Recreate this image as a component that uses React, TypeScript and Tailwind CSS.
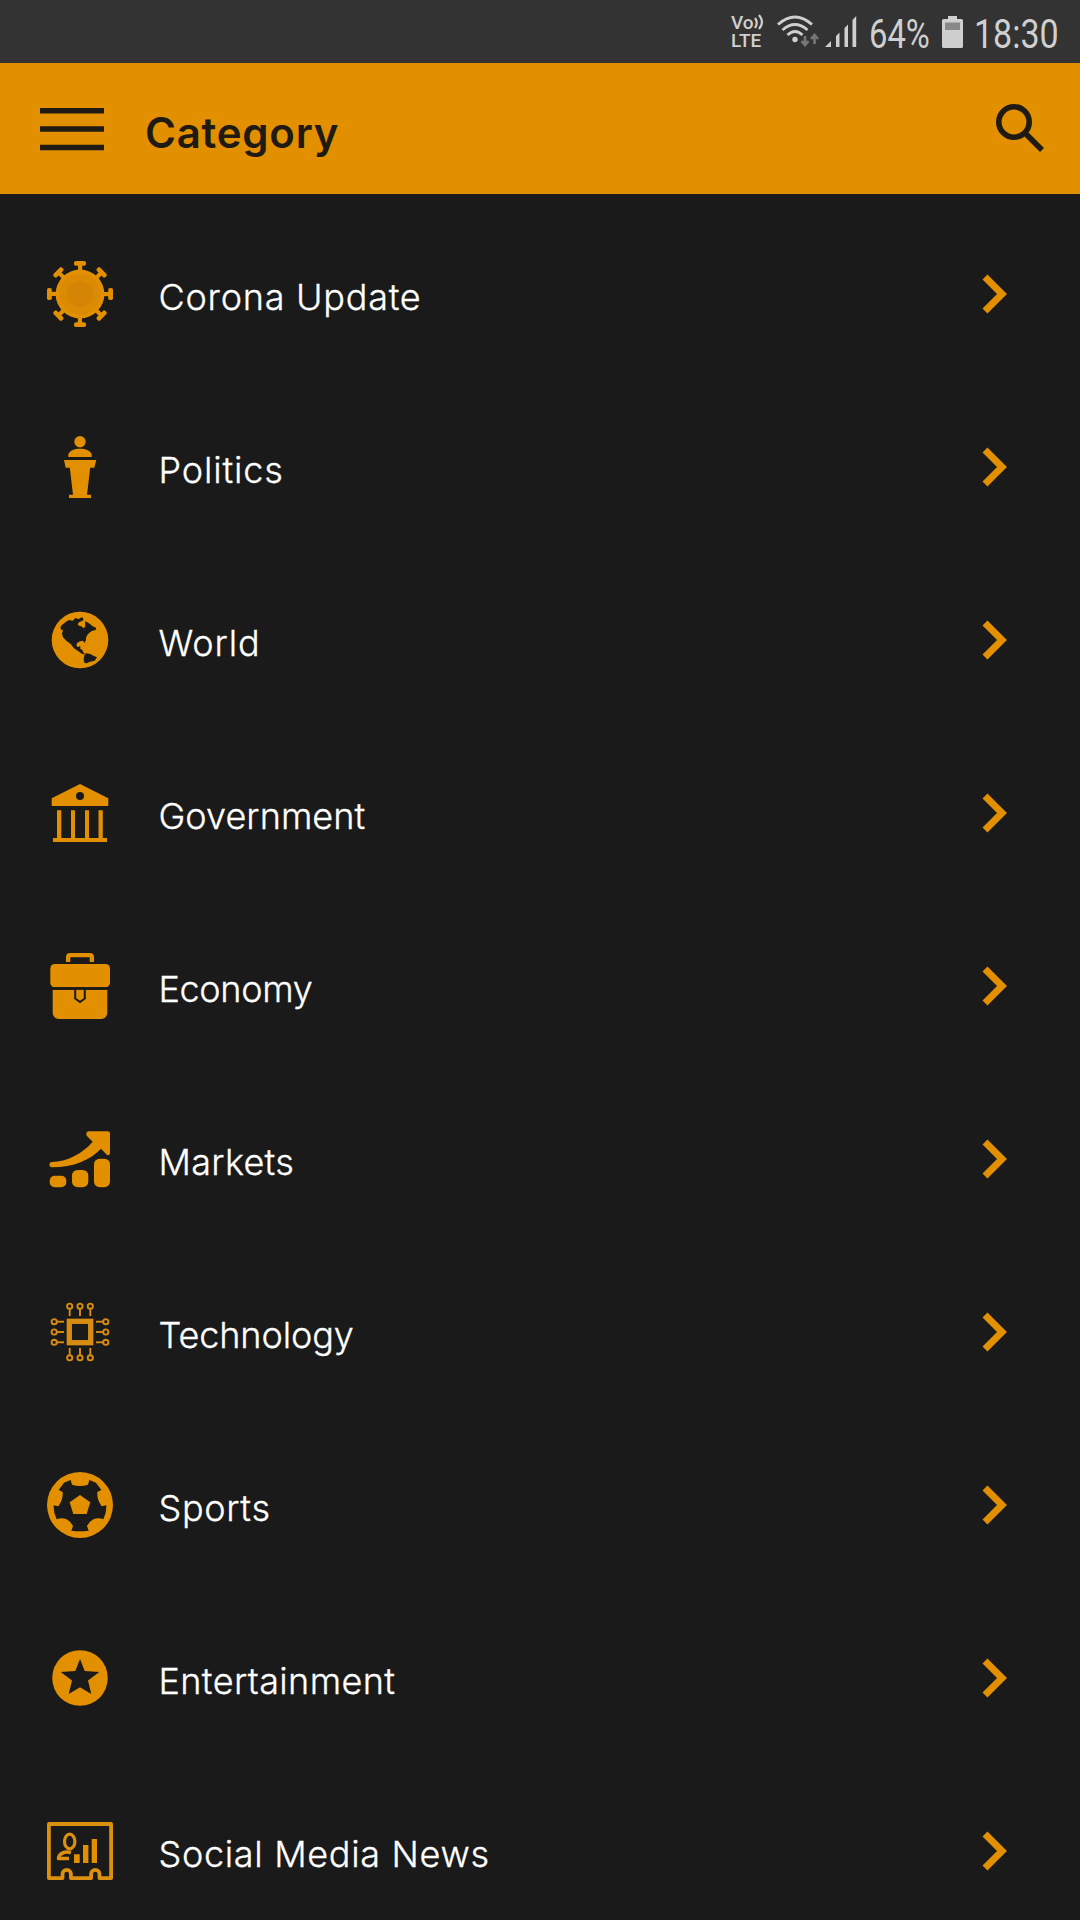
import type { ReactNode } from "react";

type Category = {
  label: string;
  tracking: string;
  icon: ReactNode;
};

const spikes = [0, 45, 90, 135, 180, 225, 270, 315];
const pins = [22.7, 33, 43.3];

function Icon({ children }: { children: ReactNode }) {
  return (
    <svg viewBox="0 0 66 66" className="h-[66px] w-[66px] shrink-0 fill-[#e28f00]">
      {children}
    </svg>
  );
}

const corona = (
  <Icon>
    {spikes.map((angle) => (
      <g key={angle} transform={`rotate(${angle} 33 33)`}>
        <rect x="27" y="0" width="12" height="4.8" rx="1.8" />
        <rect x="31" y="3" width="4.2" height="8" />
      </g>
    ))}
    <circle cx="33" cy="33" r="24.4" />
    <circle cx="33" cy="33" r="20.5" className="fill-[#db8b03]" />
    <circle cx="33" cy="33" r="13" className="fill-[#d48504]" />
  </Icon>
);

const politics = (
  <Icon>
    <circle cx="33" cy="7.7" r="5.7" />
    <path d="M21.3 23v-2.5c1-4 6-5.8 11.7-5.8s10.7 1.8 11.7 5.8V23z" />
    <path d="M17 26h32.3l-2 7.7H43.2L40 60.7h4V64H22v-3.3h4L22.8 33.7h-4.1z" />
  </Icon>
);

const world = (
  <Icon>
    <circle cx="33" cy="33" r="28.3" />
    <g transform="translate(-17 -12) scale(0.3333)" className="fill-[#1a1a1a]">
      <path d="M91 98 95 91 106 82 117 75 128 77 136 69 146 72 157 66 161 75 154 79 147 82 143 88 147 92 154 94 160 99 165 97 166 88 165 79 172 82 181 88 188 94 198 98 197 105 187 107 178 113 172 120 168 128 168 135 163 144 159 137 150 139 142 143 139 150 142 156 151 154 151 162 157 165 161 174 168 177 158 178 143 167 131 159 122 147 109 137 99 127 96 116 99 105 94 104z" />
      <path d="M163 181 169 175 181 177 190 182 201 187 194 197 180 200 170 205 163 203 161 192z" />
    </g>
  </Icon>
);

const government = (
  <Icon>
    <path fillRule="evenodd" d="M33 4 61.3 18.3V26H4.7v-7.7zM33 12a4 4 0 1 0 0 8 4 4 0 0 0 0-8z" />
    <path d="M10 30.3h4.3V58H10zM24 30.3h4V58h-4zM38 30.3h4V58h-4zM51.5 30.3h4.3V58h-4.3zM6 58h54v4H6z" />
  </Icon>
);

const economy = (
  <Icon>
    <path d="M19 9V4a4 4 0 0 1 4-4h20a4 4 0 0 1 4 4v5h-4.3V4.3H23.3V9z" />
    <rect x="3.3" y="11" width="59.7" height="23.3" rx="4.5" />
    <path d="M5.7 36.7h54.6V60a6 6 0 0 1-6 6H11.7a6 6 0 0 1-6-6z" />
    <path className="stroke-[#1a1a1a] stroke-[2]" d="M28.2 35.5h9.6v10L33 49l-4.8-3.5z" />
    <path className="fill-[#1a1a1a]" d="M5 34.3h56v2.4H5z" />
  </Icon>
);

const markets = (
  <Icon>
    <rect x="2.7" y="49.7" width="16.6" height="11.5" rx="5" />
    <rect x="25" y="44" width="16.3" height="17.2" rx="5.5" />
    <rect x="47" y="32.7" width="16" height="28.5" rx="5.5" />
    <path d="M5 36C20 35.5 35 28 45.7 15.7l-5.5-5.5c-1.7-1.9-.8-4.9 1.8-4.9h19a2 2 0 0 1 2 2v19.5c0 2.6-2.2 3-3.7 1.5L54 22.7C43 34 27 41.3 5 41.3c-3.4 0-3.4-5.3 0-5.3z" />
  </Icon>
);

const technology = (
  <Icon>
    <g className="fill-none stroke-[#d98c12] stroke-[1.9]">
      <rect x="22.3" y="22.3" width="21.4" height="21.4" className="stroke-[5.3]" />
      {[0, 90, 180, 270].map((angle) => (
        <g key={angle} transform={`rotate(${angle} 33 33)`}>
          {pins.map((x) => (
            <g key={x}>
              <circle cx={x} cy="7.2" r="2.6" />
              <path d={`M${x} 9.8V17`} />
            </g>
          ))}
        </g>
      ))}
    </g>
  </Icon>
);

const sports = (
  <Icon>
    <circle cx="33" cy="33" r="33" />
    <g transform="translate(-17 -12) scale(0.3333)">
      <path
        className="fill-[#1a1a1a]"
        d="M122 60 126 74Q150 82 174 74L178 60 198 68 214 90 202 96Q200 118 215 139L229 136Q230 158 220 178 206 172 190 178 176 186 171 198L176 212Q150 216 124 212L129 198Q124 186 110 178 94 172 80 178 70 158 71 136L85 139Q100 118 98 96L86 90 102 68z"
      />
      <path d="M150 105 181 127 170 162H130L119 127z" />
    </g>
  </Icon>
);

const entertainment = (
  <Icon>
    <circle cx="33" cy="33" r="27.8" />
    <path
      className="fill-[#1a1a1a]"
      d="m33 14 4.7 12 14.6 1L41 35.5 44.3 49 33 42.3 21.7 49 25 35.5 13.7 27l14.6-1z"
    />
  </Icon>
);

const socialMedia = (
  <Icon>
    <g className="fill-none stroke-[#dc9010] stroke-[3.8]" strokeLinejoin="round">
      <path d="M1.9 6h62.2v54.1H52.5V56a4.2 4.2 0 0 0-8.4 0v4.1H23.9V56a4.2 4.2 0 0 0-8.4 0v4.1H1.9z" />
      <ellipse cx="22.7" cy="23.5" rx="5.2" ry="7.3" className="stroke-[3.2]" />
      <path d="M24 34.5c-7-1.5-12 1-12.500 6H22" className="stroke-[3.6]" />
    </g>
    <path d="M27 36.3h5.7V45H27zM36 27h5.4v18H36zM44.7 21H50v24h-5.3z" />
  </Icon>
);

const categories: Category[] = [
  { label: "Corona Update", tracking: "tracking-[0.75px]", icon: corona },
  { label: "Politics", tracking: "tracking-[0.85px]", icon: politics },
  { label: "World", tracking: "tracking-[0.9px]", icon: world },
  { label: "Government", tracking: "tracking-[0.05px]", icon: government },
  { label: "Economy", tracking: "tracking-[-0.35px]", icon: economy },
  { label: "Markets", tracking: "tracking-[0.3px]", icon: markets },
  { label: "Technology", tracking: "tracking-[-0.1px]", icon: technology },
  { label: "Sports", tracking: "tracking-[0.65px]", icon: sports },
  { label: "Entertainment", tracking: "tracking-[0.38px]", icon: entertainment },
  { label: "Social Media News", tracking: "tracking-[0.68px]", icon: socialMedia },
];

function StatusBar() {
  return (
    <div className="flex h-[63px] shrink-0 items-start bg-[#333333] pl-[731px] font-['Roboto',sans-serif] text-[#cfcfcf]">
      <div className="mt-[14px] w-[46px] text-[19px] font-medium leading-[18px]">
        <div className="flex">
          <span>Vo</span>
          <svg viewBox="0 0 10 16" className="h-[16px] w-[10px] fill-none stroke-[#cfcfcf] stroke-[2.2]">
            <path d="M1 4q3.500 4.500 0 10M5 1q6 7 0 14" />
          </svg>
        </div>
        <div>LTE</div>
      </div>
      <svg viewBox="0 0 42 32" className="mt-[15px] h-[32px] w-[42px] fill-none stroke-[#cfcfcf] stroke-[2.8]">
        <path d="M1 9.500q17-15 34 0M5.500 15q12.500-11 25 0M10.500 20q7.500-7 15 0" />
        <circle cx="18" cy="24.5" r="2.7" className="fill-[#cfcfcf] stroke-none" />
        <path d="M28 21v9m-3.500-4 3.500 4 3.500-4M37.500 29v-9m-3.500 4 3.500-4 3.500 4" className="stroke-[#777777] stroke-[2.6]" />
      </svg>
      <svg viewBox="0 0 32 31" className="ml-[6px] mt-4 h-[31px] w-[32px] fill-[#cfcfcf]">
        <path d="M0 31l6-6v6zM11 20l3.500-3.500V31H11zM19.500 12 23 8.500V31h-3.500zM27.500 4 31.200 0v31h-3.700z" />
      </svg>
      <div className="ml-[12px] mt-[11px] w-[73px] text-[40px] leading-[47px]">
        <span className="inline-block origin-left scale-x-[0.82]">64%</span>
      </div>
      <svg viewBox="0 0 21 32" className="mt-4 h-[32px] w-[21px] fill-[#cfcfcf]">
        <path d="M6 0h9v3h4.500A1.500 1.500 0 0 1 21 4.500v26a1.500 1.500 0 0 1-1.500 1.500h-18A1.500 1.500 0 0 1 0 30.500v-26A1.500 1.500 0 0 1 1.500 3H6z" />
        <path d="M3 6.500h15V14H3z" className="fill-[#888888]" />
      </svg>
      <div className="ml-[11px] mt-[11px] w-[84px] text-[40px] leading-[47px]">
        <span className="inline-block origin-left scale-x-[0.85]">18:30</span>
      </div>
    </div>
  );
}

function Header() {
  return (
    <header className="flex h-[131px] shrink-0 items-center bg-[#e28f00] pl-10 pr-9 text-[#1f1a12]">
      <svg viewBox="0 0 64 44" className="h-11 w-16 fill-[#1f1a12]">
        <path d="M0 1h64v5.500H0zM0 19.300h64v5.500H0zM0 37.700h64v5.500H0z" />
      </svg>
      <h1 className="ml-[41px] mt-[8px] text-[42px] font-semibold leading-none tracking-[0.75px]">Category</h1>
      <svg viewBox="0 0 48 48" className="mb-[2px] ml-auto h-12 w-12 fill-none stroke-[#1f1a12] stroke-[5.6]">
        <circle cx="18" cy="18" r="15.2" />
        <path d="M28 28l3 3" className="stroke-[4]" />
        <path d="M30.500 30.500l15.500 15.500" />
      </svg>
    </header>
  );
}

function CategoryRow({ label, tracking, icon }: Category) {
  return (
    <li className="flex h-[173px] shrink-0 items-center pl-[47px] pr-[72px]">
      {icon}
      <span
        className={`ml-[45.5px] mt-[7px] whitespace-nowrap text-[36px] font-light leading-none [-webkit-text-stroke:0.3px_white] ${tracking}`}
      >
        {label}
      </span>
      <svg viewBox="0 0 26 40" className="ml-auto h-10 w-[26px] fill-none stroke-[#e28f00] stroke-[7]">
        <path d="M3 3l17 17L3 37" />
      </svg>
    </li>
  );
}

export default function App() {
  return (
    <div className="flex h-[1920px] w-[1080px] flex-col overflow-hidden bg-[#1a1a1a] font-['Inter',sans-serif] text-white">
      <StatusBar />
      <Header />
      <ul className="flex flex-col pt-[13px]">
        {categories.map((category) => (
          <CategoryRow key={category.label} {...category} />
        ))}
      </ul>
    </div>
  );
}
